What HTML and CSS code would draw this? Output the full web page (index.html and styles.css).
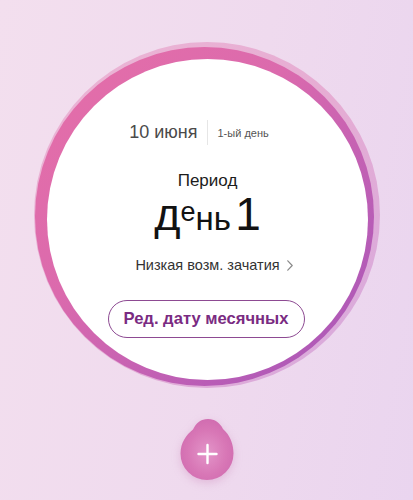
FILE: index.html
```html
<!DOCTYPE html>
<html lang="ru">
<head>
<meta charset="utf-8">
<title>Период</title>
<link rel="stylesheet" href="styles.css">
</head>
<body>
<main class="screen">
  <section class="dial">
    <div class="face">
      <div class="date-row">
        <span class="date">10 июня</span>
        <span class="sep"></span>
        <span class="cycle-day">1-ый день</span>
      </div>
      <div class="phase">Период</div>
      <div class="day"><span class="d">д</span><span class="e">е</span>нь <span class="one">1</span></div>
      <div class="chance">Низкая возм. зачатия<svg class="chev" width="6" height="11" viewBox="0 0 6 11"><polyline points="0.8,0.8 5.2,5.5 0.8,10.2" fill="none" stroke="#8a8a8a" stroke-width="1.2" stroke-linecap="round" stroke-linejoin="round"/></svg></div>
      <button class="edit">Ред. дату месячных</button>
    </div>
  </section>
  <button class="add" aria-label="Добавить">
    <svg width="60" height="66" viewBox="0 0 60 66">
      <defs>
        <radialGradient id="dg" cx="0.5" cy="0.55" r="0.6">
          <stop offset="0" stop-color="#e395c9"/>
          <stop offset="0.6" stop-color="#d877b6"/>
          <stop offset="1" stop-color="#cf6aaf"/>
        </radialGradient>
      </defs>
      <path d="M31,3 C38,3 43,7 46,13 C53,19 56.5,28 56.5,37.5 A26.5,26.5 0 0 1 3.5,37.5 C3.5,27 9,19 16,13.5 C19,7 24,3 31,3 Z" fill="url(#dg)"/>
      <path d="M30.5,29 V47 M21.5,38 H39.5" stroke="#fff" stroke-width="2.4" stroke-linecap="round"/>
    </svg>
  </button>
</main>
</body>
</html>
```
FILE: styles.css
```css
html, body {
  margin: 0;
  padding: 0;
}
body {
  width: 413px;
  height: 500px;
  overflow: hidden;
  font-family: "Liberation Sans", Arial, sans-serif;
  background: linear-gradient(100deg, #f3dfee 0%, #efdaee 55%, #ead5ef 100%);
}
.screen {
  display: flex;
  flex-direction: column;
  align-items: center;
  height: 500px;
}
.dial {
  position: relative;
  box-sizing: border-box;
  width: 346px;
  height: 346px;
  margin-top: 42px;
  padding: 17px 0 0 13.5px;
  border-radius: 50%;
  background: linear-gradient(135deg, #ecb6d5 0%, #e6acd3 50%, #d6aade 100%);
}
.dial::before {
  content: "";
  position: absolute;
  left: 1.5px;
  top: 4.5px;
  width: 339px;
  height: 339px;
  border-radius: 50%;
  background: linear-gradient(135deg, #e66fa8 0%, #db6aad 40%, #b95db6 75%, #a556b8 100%);
}
.face {
  position: relative;
  z-index: 1;
  box-sizing: border-box;
  width: 321px;
  height: 321px;
  border-radius: 50%;
  background: #fff;
  display: flex;
  flex-direction: column;
  align-items: center;
  padding-top: 59px;
}
.date-row {
  display: grid;
  grid-template-columns: 1fr 1px 1fr;
  column-gap: 9.5px;
  width: 100%;
  height: 25px;
  align-items: center;
}
.date {
  justify-self: end;
  font-size: 18px;
  line-height: 25px;
  color: #4a4a4a;
}
.sep {
  height: 25px;
  background: #e6e6e6;
}
.cycle-day {
  justify-self: start;
  font-size: 11px;
  line-height: 25px;
  padding-top: 3px;
  color: #555;
}
.phase {
  margin-top: 28px;
  font-size: 17px;
  line-height: 20px;
  color: #1c1c1c;
}
.day {
  margin-top: 3px;
  font-size: 33px;
  line-height: 40px;
  color: #121212;
  white-space: nowrap;
  word-spacing: -5px;
}
.day .d {
  font-size: 45px;
  line-height: 40px;
}
.day .e {
  font-size: 27px;
  line-height: 30px;
  vertical-align: 9px;
}
.day .one {
  font-size: 46px;
  line-height: 40px;
}
.chance {
  margin-top: 17px;
  font-size: 14.5px;
  line-height: 18px;
  color: #333;
  display: flex;
  align-items: center;
}
.chev {
  margin-left: 7px;
  margin-right: -13px;
}
.edit {
  margin-top: 26px;
  box-sizing: border-box;
  width: 197px;
  height: 38px;
  border: 1.5px solid #8d4a92;
  border-radius: 19px;
  background: #fff;
  font-family: "Liberation Sans", Arial, sans-serif;
  font-weight: 700;
  font-size: 16.6px;
  color: #7a2b82;
  padding: 0;
  margin-left: -3px;
}
.add {
  margin-top: 28px;
  padding: 0;
  border: 0;
  background: none;
  width: 60px;
  height: 66px;
  margin-left: 1px;
  filter: drop-shadow(0 3px 4px rgba(190, 100, 165, 0.28));
}
.add svg {
  display: block;
}
```
